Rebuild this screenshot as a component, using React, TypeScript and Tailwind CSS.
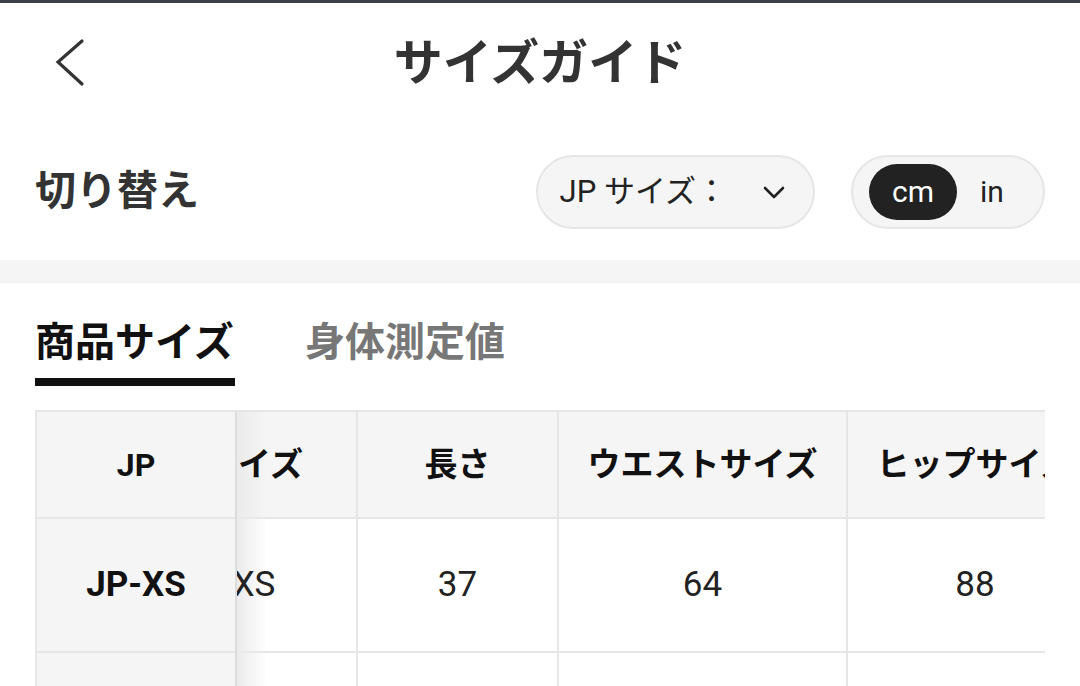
import React from "react";

const FONT = 'Roboto, "Noto Sans CJK JP", "Noto Sans", sans-serif';

const cols = [
  { label: "サイズ", w: "w-[202px] pr-[4px]", value: "XS" },
  { label: "長さ", w: "w-[201px]", value: "37" },
  { label: "ウエストサイズ", w: "w-[289px]", value: "64" },
  { label: "ヒップサイズ", w: "w-[256px]", value: "88" },
];

function BackIcon() {
  return (
    <svg width="34" height="50" viewBox="0 0 34 50" fill="none">
      <polyline points="28,3 4,24 28,46" stroke="#333" strokeWidth="3.2" strokeLinecap="round" strokeLinejoin="miter" />
    </svg>
  );
}

function ChevronDown() {
  return (
    <svg width="22" height="14" viewBox="0 0 22 14" fill="none">
      <polyline points="2,2 11,11 20,2" stroke="#222" strokeWidth="2.6" strokeLinecap="round" strokeLinejoin="round" />
    </svg>
  );
}

export default function App() {
  return (
    <div className="w-[1080px] h-[686px] overflow-hidden bg-white" style={{ fontFamily: FONT }}>
      <div className="h-[3px] bg-[#3c4149]" />

      {/* header */}
      <div className="grid grid-cols-[1fr_auto_1fr] items-center h-[120px] px-[40px]">
        <div className="flex items-center pl-[14px]">
          <BackIcon />
        </div>
        <h1 className="text-[49px] leading-none font-bold text-[#333]">サイズガイド</h1>
        <div />
      </div>

      {/* switch row */}
      <div className="flex items-center justify-between h-[137px] px-[35px]">
        <span className="text-[41px] leading-none font-bold text-[#333]">切り替え</span>
        <div className="flex items-center gap-[36px]">
          <div className="flex items-center h-[74px] pl-[22px] pr-[28px] rounded-full border-2 border-[#e6e6e6] bg-[#f5f5f5]">
            <span className="text-[31px] leading-none text-[#222]">JP サイズ：</span>
            <span className="ml-[36px] flex items-center pt-[2px]">
              <ChevronDown />
            </span>
          </div>
          <div className="flex items-center py-[7px] px-[16px] rounded-full border-2 border-[#e6e6e6] bg-[#f5f5f5]">
            <span className="flex items-center justify-center w-[88px] h-[56px] rounded-full bg-[#222] text-white text-[30px] leading-none">
              cm
            </span>
            <span className="flex items-center justify-center w-[70px] h-[56px] text-[#222] text-[30px] leading-none">
              in
            </span>
          </div>
        </div>
      </div>

      <div className="h-[23px] bg-[#f5f5f5]" />

      {/* tabs */}
      <div className="flex gap-[70px] px-[35px] pt-[40px]">
        <div className="flex flex-col">
          <span className="text-[40px] leading-[40px] font-bold text-[#111]">商品サイズ</span>
          <span className="mt-[15px] h-[8px] w-[200px] bg-[#111]" />
        </div>
        <span className="text-[40px] leading-[40px] font-bold text-[#777]">身体測定値</span>
      </div>

      {/* table */}
      <div className="mx-[35px] mt-[24px] flex border-t-2 border-l-2 border-[#e6e6e6]">
        <div className="w-[200px] shrink-0 bg-[#f5f5f5] border-r-2 border-[#dcdcdc]">
          <div className="h-[107px] flex items-center justify-center border-b-2 border-[#e6e6e6] text-[32px] font-bold text-[#111]">
            JP
          </div>
          <div className="h-[134px] flex items-center justify-center border-b-2 border-[#e6e6e6] text-[35px] font-bold text-[#111]">
            JP-XS
          </div>
          <div className="h-[134px]" />
        </div>
        <div className="relative flex-1 overflow-hidden">
          <div className="absolute left-0 top-0 bottom-0 w-[30px] bg-gradient-to-r from-[#ebebeb] to-transparent" />
          <div className="ml-[-81px] w-max">
            <div className="flex bg-[#f5f5f5] border-b-2 border-[#e6e6e6]">
              {cols.map((c) => (
                <div
                  key={c.label}
                  className={`${c.w} h-[105px] shrink-0 flex items-center justify-center border-r-2 border-[#e6e6e6] text-[33px] font-bold text-[#111] whitespace-nowrap`}
                >
                  <span className="relative">{c.label}</span>
                </div>
              ))}
            </div>
            <div className="flex border-b-2 border-[#e6e6e6]">
              {cols.map((c) => (
                <div
                  key={c.label}
                  className={`${c.w} h-[132px] shrink-0 flex items-center justify-center border-r-2 border-[#e6e6e6] text-[35px] text-[#222]`}
                >
                  <span className="relative">{c.value}</span>
                </div>
              ))}
            </div>
            <div className="flex">
              {cols.map((c) => (
                <div key={c.label} className={`${c.w} h-[134px] shrink-0 border-r-2 border-[#e6e6e6]`} />
              ))}
            </div>
          </div>
        </div>
      </div>
    </div>
  );
}
